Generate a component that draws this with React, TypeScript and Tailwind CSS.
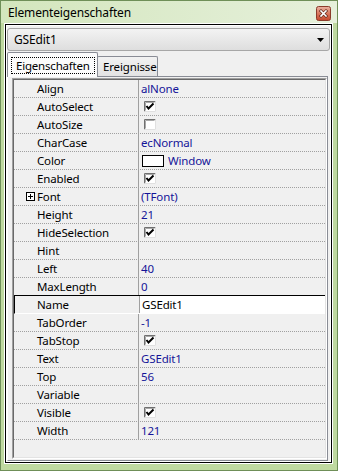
import React from 'react';

type Row = {
  name: string;
  value?: string;
  check?: boolean;
  color?: boolean;
  expand?: boolean;
  selected?: boolean;
};

const rows: Row[] = [
  { name: 'Align', value: 'alNone' },
  { name: 'AutoSelect', check: true },
  { name: 'AutoSize', check: false },
  { name: 'CharCase', value: 'ecNormal' },
  { name: 'Color', value: 'Window', color: true },
  { name: 'Enabled', check: true },
  { name: 'Font', value: '(TFont)', expand: true },
  { name: 'Height', value: '21' },
  { name: 'HideSelection', check: true },
  { name: 'Hint' },
  { name: 'Left', value: '40' },
  { name: 'MaxLength', value: '0' },
  { name: 'Name', value: 'GSEdit1', selected: true },
  { name: 'TabOrder', value: '-1' },
  { name: 'TabStop', check: true },
  { name: 'Text', value: 'GSEdit1' },
  { name: 'Top', value: '56' },
  { name: 'Variable' },
  { name: 'Visible', check: true },
  { name: 'Width', value: '121' },
];

function CloseButton() {
  return (
    <svg width="15" height="15" viewBox="0 0 15 15" className="mt-[5px]">
      <defs>
        <linearGradient id="cb" x1="0" y1="0" x2="0" y2="1">
          <stop offset="0" stopColor="#eab3a3" />
          <stop offset="0.5" stopColor="#d9775d" />
          <stop offset="1" stopColor="#c4472c" />
        </linearGradient>
      </defs>
      <rect x="0.5" y="0.5" width="14" height="14" rx="2" fill="url(#cb)" stroke="#8b3b2b" />
      <path d="M5 5 L10 10 M10 5 L5 10" stroke="#5a2418" strokeWidth="3" strokeLinecap="square" />
      <path d="M5 5 L10 10 M10 5 L5 10" stroke="#ffffff" strokeWidth="1.6" strokeLinecap="square" />
    </svg>
  );
}

function Check({ checked }: { checked: boolean }) {
  return (
    <svg width="12" height="11" viewBox="0 0 12 11" className="ml-[3px] shrink-0">
      <rect x="0" y="0" width="12" height="11" fill="#ffffff" />
      <path d="M0.5 10.5 V0.5 H11.5" stroke="#707070" fill="none" />
      <path d="M1.5 9.5 V1.5 H10.5" stroke="#a8a8a8" fill="none" />
      <path d="M0.5 10.5 H11.5 V0.5" stroke="#e0e0e0" fill="none" />
      {checked && (
        <path d="M2.5 5 L4.5 7.5 L9.5 2.5" stroke="#000000" strokeWidth="2" fill="none" />
      )}
    </svg>
  );
}

function PlusBox() {
  return (
    <svg width="9" height="9" viewBox="0 0 9 9" className="shrink-0">
      <rect x="0.5" y="0.5" width="8" height="8" fill="#ffffff" stroke="#000000" />
      <path d="M2 4.5 H7 M4.5 2 V7" stroke="#000000" />
    </svg>
  );
}

function PropRow({ row, next }: { row: Row; next?: Row }) {
  const bottom = next?.selected
    ? 'border-solid border-black'
    : row.selected
      ? 'border-solid border-white'
      : 'border-dotted border-[#a0a0a0]';
  return (
    <div className={`h-[18px] flex border-b ${bottom} ${row.selected ? 'border-l border-l-black' : ''}`}>
      <div
        className={`w-[125px] shrink-0 flex items-center border-r border-[#a0a0a0] ${
          row.expand ? 'pl-[12px]' : row.selected ? 'pl-[22px]' : 'pl-[23px]'
        }`}
      >
        {row.expand && <PlusBox />}
        <span className={`leading-[17px] ${row.expand ? 'ml-[2px]' : ''}`}>{row.name}</span>
      </div>
      <div
        className={`flex-1 flex items-center pl-[2px] ${
          row.selected ? 'bg-white text-black' : 'text-[#141498]'
        }`}
      >
        {row.check !== undefined && <Check checked={row.check} />}
        {row.color && (
          <span className="ml-[1px] w-[22px] h-[12px] border border-black bg-white shrink-0" />
        )}
        {row.value && (
          <span className={`leading-[17px] ${row.color ? 'ml-[4px]' : ''}`}>{row.value}</span>
        )}
      </div>
    </div>
  );
}

export default function App() {
  return (
    <div className="w-[338px] h-[471px] flex flex-col border border-[#6f8f58] bg-[#bfd9a0] font-['Noto_Sans',sans-serif] text-[11.5px] tracking-[-0.15px] text-black select-none">
      {/* Title bar */}
      <div className="h-[22px] shrink-0 flex items-start justify-between pl-[7px] pr-[6px] bg-gradient-to-r from-[#d3e6bd] to-[#e6f0db]">
        <span className="mt-[4px] leading-[16px] text-[12px]">Elementeigenschaften</span>
        <CloseButton />
      </div>

      {/* Client area */}
      <div className="flex-1 min-h-0 ml-[3px] mr-[4px] mb-[6px] border border-white">
        <div className="h-full border border-black">
          <div className="h-full border border-white bg-[#f0f0f0] flex flex-col">
            {/* Component selector */}
            <div className="mt-[2px] h-[23px] shrink-0 flex items-center justify-between pl-[6px] pr-[5px] rounded-[3px] border border-[#a7a7a7] bg-gradient-to-b from-[#f3f3f3] to-[#dedede]">
              <span className="leading-[16px] text-[12px]">GSEdit1</span>
              <svg width="7" height="4" viewBox="0 0 7 4">
                <path d="M0 0 H7 L3.5 4 Z" fill="#000000" />
              </svg>
            </div>

            {/* Tabs */}
            <div className="mt-[1px] h-[24px] shrink-0 flex items-end">
              <div className="relative z-10 -mb-px h-[25px] w-[91px] flex items-center border border-b-0 border-[#898c95] rounded-t-[2px] bg-[#fbfbfb]">
                <span className="ml-[3px] h-[17px] w-[84px] flex items-center pl-[4px] border border-dotted border-black leading-[15px] tracking-[-0.2px]">
                  Eigenschaften
                </span>
              </div>
              <div className="h-[20px] w-[61px] -ml-px flex items-center pl-[5px] border border-b-0 border-[#898c95] rounded-t-[2px] bg-gradient-to-b from-[#f2f2f2] to-[#e3e3e3] leading-[15px]">
                Ereignisse
              </div>
            </div>

            {/* Tab panel */}
            <div className="flex-1 min-h-0 mr-[2px] border border-[#898c95] border-l-white flex pl-[4px] py-[1px]">
              <div className="flex-1 border border-[#a0a0a0] border-r-white border-b-white">
                <div className="h-full border border-[#696969] border-r-[#e3e3e3] border-b-[#e3e3e3] bg-[#f0f0f0]">
                  {rows.map((row, i) => (
                    <PropRow key={row.name} row={row} next={rows[i + 1]} />
                  ))}
                </div>
              </div>
            </div>
          </div>
        </div>
      </div>
    </div>
  );
}
